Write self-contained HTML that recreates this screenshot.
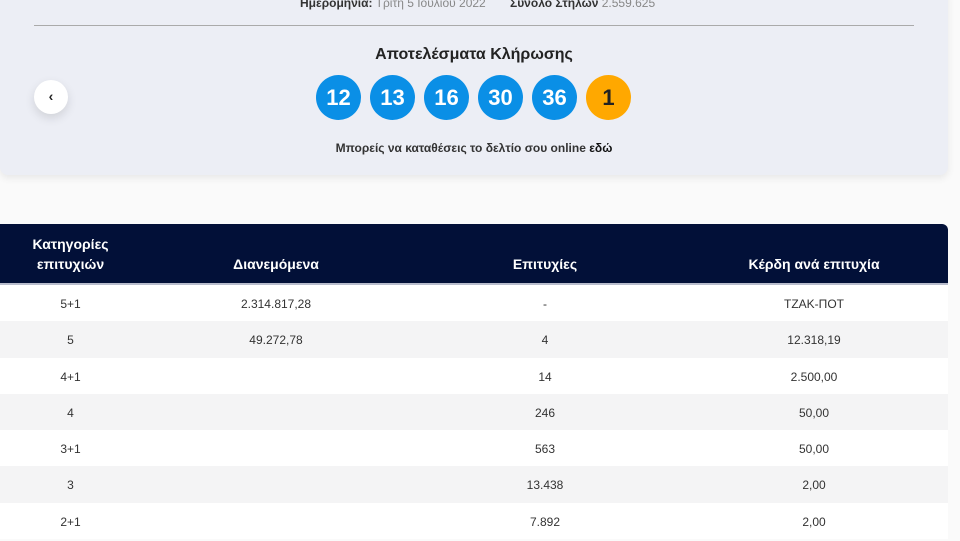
<!DOCTYPE html>
<html><head><meta charset="utf-8"><style>
body{margin:0;width:960px;height:526px;overflow:hidden;background:#fafafa;font-family:"Liberation Sans","DejaVu Sans",sans-serif;color:#222;position:relative}
.card{position:absolute;left:0;top:-10px;width:948px;height:185px;background:#eceef5;border-radius:0 0 8px 8px;box-shadow:0 3px 8px rgba(0,0,0,.08)}
.top{position:absolute;font-size:12px;color:#888;white-space:nowrap}
.top b{color:#333}
.line{position:absolute;left:34px;top:25px;width:880px;height:1px;background:#aaa}
h2{position:absolute;top:46px;left:0;width:948px;text-align:center;margin:0;font-size:16px;font-weight:bold;color:#222}
.ball{position:absolute;top:75px;width:45px;height:45px;border-radius:50%;background:#0a8fe6;color:#fff;font-weight:bold;font-size:22px;text-align:center;line-height:45px}
.sub{position:absolute;top:141px;left:0;width:948px;text-align:center;font-size:12px;font-weight:bold;color:#333}
.btn{position:absolute;left:34px;top:80px;width:34px;height:34px;border-radius:50%;background:#fff;box-shadow:0 4px 10px rgba(0,0,0,.12);text-align:center;line-height:32px;font-size:14px;font-weight:bold;color:#222}
.tbl{position:absolute;left:0;top:224px;width:948px}
.hd{height:61px;background:#021038;border-radius:0 6px 0 0;position:relative;color:#fff;font-weight:bold;font-size:14px;border-bottom:2px solid #b8bccc;box-sizing:border-box}
.hd div,.row div{position:absolute;text-align:center}
.row{height:36.3px;position:relative;font-size:12px;color:#333;line-height:38px}
.row:nth-child(odd){background:#fff}.row:nth-child(even){background:#f4f4f5}
</style></head><body>
<div class="card">
<div class="top" style="left:300px;top:6px"><b>Ημερομηνία:</b> Τρίτη 5 Ιουλίου 2022</div>
<div class="top" style="left:510px;top:6px"><b>Σύνολο Στηλών</b> 2.559.625</div>
</div>
<div class="line"></div>
<h2>Αποτελέσματα Κλήρωσης</h2>
<div class="ball" style="left:316px">12</div>
<div class="ball" style="left:370px">13</div>
<div class="ball" style="left:424px">16</div>
<div class="ball" style="left:478px">30</div>
<div class="ball" style="left:532px">36</div>
<div class="ball" style="left:586px;background:#ffa800;color:#222">1</div>
<div class="sub">Μπορείς να καταθέσεις το δελτίο σου online <b style="color:#111">εδώ</b></div>
<div class="btn">‹</div>
<div class="tbl">
<div class="hd">
<div style="left:0;width:141px;top:10px;line-height:20px">Κατηγορίες<br>επιτυχιών</div>
<div style="left:176px;width:200px;top:32px">Διανεμόμενα</div>
<div style="left:445px;width:200px;top:32px">Επιτυχίες</div>
<div style="left:714px;width:200px;top:32px">Κέρδη ανά επιτυχία</div>
</div>
<div>
<div class="row"><div style="left:0;width:141px">5+1</div><div style="left:176px;width:200px">2.314.817,28</div><div style="left:445px;width:200px">-</div><div style="left:714px;width:200px">ΤΖΑΚ-ΠΟΤ</div></div>
<div class="row"><div style="left:0;width:141px">5</div><div style="left:176px;width:200px">49.272,78</div><div style="left:445px;width:200px">4</div><div style="left:714px;width:200px">12.318,19</div></div>
<div class="row"><div style="left:0;width:141px">4+1</div><div style="left:445px;width:200px">14</div><div style="left:714px;width:200px">2.500,00</div></div>
<div class="row"><div style="left:0;width:141px">4</div><div style="left:445px;width:200px">246</div><div style="left:714px;width:200px">50,00</div></div>
<div class="row"><div style="left:0;width:141px">3+1</div><div style="left:445px;width:200px">563</div><div style="left:714px;width:200px">50,00</div></div>
<div class="row"><div style="left:0;width:141px">3</div><div style="left:445px;width:200px">13.438</div><div style="left:714px;width:200px">2,00</div></div>
<div class="row"><div style="left:0;width:141px">2+1</div><div style="left:445px;width:200px">7.892</div><div style="left:714px;width:200px">2,00</div></div>
</div>
</div>
</body></html>
